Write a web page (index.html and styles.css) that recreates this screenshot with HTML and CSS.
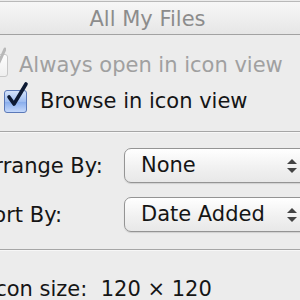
FILE: index.html
```html
<!DOCTYPE html>
<html>
<head>
<meta charset="UTF-8">
<title>View Options</title>
<link rel="stylesheet" href="styles.css">
</head>
<body>
<div class="panel">
	<div class="titlebar">All My Files</div>

	<div class="options">
		<label class="check disabled">
			<span class="box">
				<svg width="22" height="30" viewBox="0 0 22 30"><path d="M7 18 L12 24 L21 4" fill="none" stroke="#b8b8b8" stroke-width="3" stroke-linecap="round" stroke-linejoin="round"/></svg>
			</span>
			Always open in icon view
		</label>
		<label class="check sub">
			<span class="box on">
				<svg width="26" height="30" viewBox="0 0 26 30"><path d="M6 16 L11 23 L23 3" fill="none" stroke="#0d1a33" stroke-width="3.6" stroke-linecap="round" stroke-linejoin="round"/></svg>
			</span>
			Browse in icon view
		</label>
	</div>

	<div class="sep"></div>

	<div class="fields">
		<span class="label">Arrange By:</span>
		<div class="popup">None<span class="arrows"></span></div>
		<span class="label">Sort By:</span>
		<div class="popup">Date Added<span class="arrows"></span></div>
	</div>

	<div class="sep"></div>

	<div class="size">Icon size: &nbsp;120 × 120</div>
</div>
</body>
</html>
```

FILE: styles.css
```css
* {
	margin: 0;
	padding: 0;
	box-sizing: border-box;
}

body {
	width: 300px;
	height: 300px;
	overflow: hidden;
	background: #ececec;
	font-family: 'DejaVu Sans', sans-serif;
	font-size: 21px;
	color: #151515;
}

.panel {
	width: 335px;
	margin-left: -20px;
}

.titlebar {
	margin-top: 1px;
	height: 34px;
	padding-top: 3px;
	line-height: 28px;
	border-top: 1px solid #b9b9b9;
	border-bottom: 1px solid #a2a2a2;
	background: linear-gradient(#f7f7f7, #e6e6e6);
	color: #8c8c8c;
	text-align: center;
}

.options {
	padding: 12px 0 12px 5px;
}

.check {
	display: flex;
	align-items: center;
	height: 36px;
}

.check.sub {
	padding-left: 19px;
}

.check.disabled {
	color: #a0a0a0;
}

.box {
	position: relative;
	width: 23px;
	height: 23px;
	margin-right: 11px;
	border: 1px solid #c8c8c8;
	border-radius: 3px;
	background: linear-gradient(#fdfdfd, #efefef);
}

.box.on {
	margin-right: 13px;
	border: 1px solid #5b79b8;
	background: linear-gradient(#d5e4fb, #9fbdf0 50%, #86abeb 51%, #c4d8fb);
}

.box svg {
	position: absolute;
	left: -2px;
	top: -10px;
}

.sep {
	height: 2px;
	border-top: 1px solid #a6a6a6;
	border-bottom: 1px solid #f7f7f7;
}

.fields {
	display: grid;
	grid-template-columns: 144px 190px;
	row-gap: 14px;
	align-items: center;
	padding: 15px 0 17px;
}

.popup {
	position: relative;
	height: 35px;
	line-height: 33px;
	padding-left: 16px;
	border: 1px solid #949494;
	border-radius: 7px;
	background: linear-gradient(#ffffff, #f1f1f1 55%, #e8e8e8);
	box-shadow: 0 1px 1px rgba(0, 0, 0, 0.12);
}

.arrows {
	position: absolute;
	left: 162px;
	top: 10px;
	width: 10px;
	height: 14px;
}

.arrows::before,
.arrows::after {
	content: "";
	position: absolute;
	left: 0;
	border-left: 5px solid transparent;
	border-right: 5px solid transparent;
}

.arrows::before {
	top: 0;
	border-bottom: 5px solid #444;
}

.arrows::after {
	bottom: 0;
	border-top: 5px solid #444;
}

.size {
	padding: 26px 0 0 9px;
}
```
